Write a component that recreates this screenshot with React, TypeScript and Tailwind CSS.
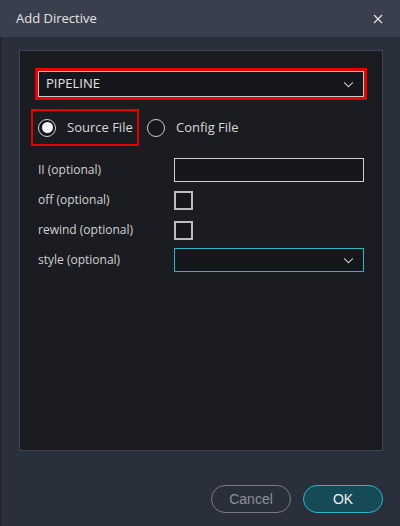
import { FunctionComponent } from 'react';

const Chevron: FunctionComponent<{ className?: string }> = ({ className }) => (
  <svg viewBox="0 0 12 8" className={className} fill="none" stroke="currentColor" strokeWidth="1.2">
    <path d="M1 1.5l5 5 5-5" />
  </svg>
);

const Radio: FunctionComponent<{ checked?: boolean; label: string }> = ({ checked, label }) => (
  <div className="flex items-center">
    <span className="flex h-[18px] w-[18px] items-center justify-center rounded-full border border-[#d0d0d0] bg-[#16171c]">
      {checked && <span className="h-[11px] w-[11px] rounded-full bg-[#f2f2f2]" />}
    </span>
    <span className="ml-[11px] text-[13px] text-[#d8d8d8]">{label}</span>
  </div>
);

const Row: FunctionComponent<{ label: string; children: React.ReactNode }> = ({ label, children }) => (
  <div className="flex h-[30px] items-center">
    <span className="w-[136px] text-[12px] text-[#d2d2d2]">{label}</span>
    {children}
  </div>
);

export default function App() {
  return (
    <div className="flex h-[526px] w-[400px] flex-col bg-[#2a2f3c] font-['Open_Sans',sans-serif]">
      <div className="flex h-[37px] shrink-0 items-center justify-between bg-[#3a3f4e] pl-4 pr-[17px]">
        <span className="text-[13px] text-[#e4e4e4]">Add Directive</span>
        <svg viewBox="0 0 10 10" className="h-[10px] w-[10px] text-[#e0e0e0]" stroke="currentColor" strokeWidth="1.3">
          <path d="M1 1l8 8M9 1l-8 8" />
        </svg>
      </div>
      <div className="flex flex-1 flex-col border-l border-[#1f2129]">
        <div className="ml-[18px] mt-[13px] h-[401px] w-[364px] border border-[#3e4252] bg-[#1b1c21] pl-[15px] pr-[15px] pt-[17px]">
          <div className="border-[3px] border-[#e60000]">
            <div className="flex h-[26px] items-center justify-between border border-[#c8c8c8] bg-[#16171c] pl-[7px] pr-[9px]">
              <span className="text-[13px] text-[#e2e2e2]">PIPELINE</span>
              <Chevron className="h-[7px] w-[11px] text-[#c8c8c8]" />
            </div>
          </div>
          <div className="mt-[9px] flex items-center">
            <div className="-ml-[4px] flex h-[37px] w-[108px] items-center border-2 border-[#e60000] pl-[5px]">
              <Radio checked label="Source File" />
            </div>
            <div className="ml-[8px]">
              <Radio label="Config File" />
            </div>
          </div>
          <div className="mt-[9px] pl-[3px]">
            <Row label="II (optional)">
              <div className="h-[24px] w-[190px] border border-[#cfcfcf] bg-[#16171c]" />
            </Row>
            <Row label="off (optional)">
              <div className="h-[19px] w-[19px] border-2 border-[#bdbdbd] bg-[#16171c]" />
            </Row>
            <Row label="rewind (optional)">
              <div className="h-[19px] w-[19px] border-2 border-[#bdbdbd] bg-[#16171c]" />
            </Row>
            <Row label="style (optional)">
              <div className="flex h-[24px] w-[190px] items-center justify-end border border-[#2bb7c5] bg-[#16171c] pr-[9px]">
                <Chevron className="h-[7px] w-[11px] text-[#c8c8c8]" />
              </div>
            </Row>
          </div>
        </div>
        <div className="mt-auto mb-[13px] flex justify-end gap-3 pr-[17px] font-['Liberation_Sans',sans-serif]">
          <button className="h-[28px] w-[80px] rounded-full border border-[#7a7d85] text-[14px] text-[#8d9099]">
            Cancel
          </button>
          <button className="h-[28px] w-[80px] rounded-full border border-[#2bb7c5] bg-[#164a57] text-[14px] text-[#eeeeee]">
            OK
          </button>
        </div>
      </div>
    </div>
  );
}
